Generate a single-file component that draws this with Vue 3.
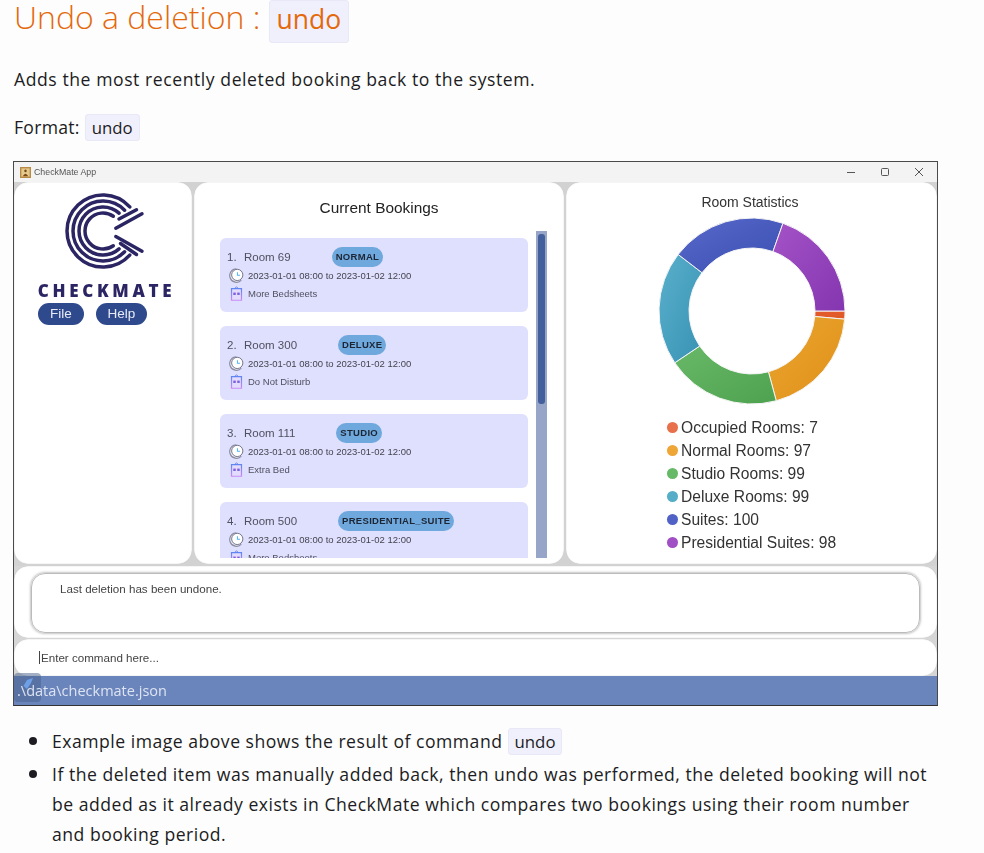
<script setup>
const bookings = [
  { n: '1.', room: 'Room 69', type: 'NORMAL', tag: 'More Bedsheets' },
  { n: '2.', room: 'Room 300', type: 'DELUXE', tag: 'Do Not Disturb' },
  { n: '3.', room: 'Room 111', type: 'STUDIO', tag: 'Extra Bed' },
  { n: '4.', room: 'Room 500', type: 'PRESIDENTIAL_SUITE', tag: 'More Bedsheets' }
]
const stats = [
  { label: 'Occupied Rooms: 7', v: 7, dot: '#e8704a', a: '#e55a2b', b: '#de5b26' },
  { label: 'Normal Rooms: 97', v: 97, dot: '#eea636', a: '#eaa52e', b: '#e0901a' },
  { label: 'Studio Rooms: 99', v: 99, dot: '#66b966', a: '#68b868', b: '#4ea24f' },
  { label: 'Deluxe Rooms: 99', v: 99, dot: '#56adc8', a: '#58b0cc', b: '#3a92b4' },
  { label: 'Suites: 100', v: 100, dot: '#5162c6', a: '#5868c8', b: '#3a50b4' },
  { label: 'Presidential Suites: 98', v: 98, dot: '#a04fc4', a: '#a452c6', b: '#8436b0' }
]
const total = stats.reduce((s, x) => s + x.v, 0)
const cx = 100, cy = 100, R = 93, r = 63
const pt = (rad, deg) => {
  const t = (deg * Math.PI) / 180
  return `${(cx + rad * Math.cos(t)).toFixed(2)} ${(cy + rad * Math.sin(t)).toFixed(2)}`
}
let acc = 0
const slices = stats.map((s, i) => {
  const start = acc
  const sweep = (s.v / total) * 360
  acc += sweep
  const end = acc
  const large = sweep > 180 ? 1 : 0
  return {
    id: 'grad' + i,
    a: s.a,
    b: s.b,
    d: `M${pt(R, start)} A${R} ${R} 0 ${large} 1 ${pt(R, end)} L${pt(r, end)} A${r} ${r} 0 ${large} 0 ${pt(r, start)} Z`
  }
})
const logoArc = (rad, deg) => {
  const c = 40
  const p = (d) => {
    const t = (d * Math.PI) / 180
    return `${(c + rad * Math.cos(t)).toFixed(2)} ${(c + rad * Math.sin(t)).toFixed(2)}`
  }
  return `M${p(-deg)} A${rad} ${rad} 0 1 0 ${p(deg)}`
}
const logoRings = [
  { rad: 36, deg: 42 },
  { rad: 30, deg: 44 },
  { rad: 24, deg: 48 },
  { rad: 18, deg: 55 }
]
</script>

<template>
  <div class="page">
    <h2 class="title">Undo a deletion : <code class="chip">undo</code></h2>
    <p class="lead">Adds the most recently deleted booking back to the system.</p>
    <p class="format">Format: <code class="chip small">undo</code></p>

    <div class="window">
      <div class="titlebar">
        <svg class="appicon" viewBox="0 0 12 12">
          <rect width="12" height="12" fill="#b98a45" />
          <rect x="1.5" y="1.5" width="9" height="9" fill="#e4c98e" />
          <path d="M6 2.8 a1.4 1.4 0 1 1 -.01 0 M3 10 Q6 4.5 9 10 Z" fill="#7a4716" />
        </svg>
        <span class="apptitle">CheckMate App</span>
        <div class="winbtns">
          <svg viewBox="0 0 10 10"><path d="M1 5.5h8" /></svg>
          <svg viewBox="0 0 10 10"><rect x="1.5" y="1.5" width="7" height="7" rx="1" /></svg>
          <svg viewBox="0 0 10 10"><path d="M1 1l8 8M9 1l-8 8" /></svg>
        </div>
      </div>

      <div class="panes">
        <section class="panel left">
          <svg class="logo" viewBox="0 0 80 80">
            <path v-for="ring in logoRings" :key="ring.rad" :d="logoArc(ring.rad, ring.deg)" class="ring" />
            <path d="M52.8 37.2 L79 22.8 M56 28 L73.5 18.8" class="ring" />
            <path d="M52.8 45.5 L79 60.2 M57.5 52.5 L73.5 63.5" class="ring" />
          </svg>
          <div class="wordmark">CHECKMATE</div>
          <div class="menu">
            <span class="pill">File</span>
            <span class="pill help">Help</span>
          </div>
        </section>

        <section class="panel center">
          <h3 class="heading">Current Bookings</h3>
          <div class="listarea">
            <div class="list">
              <article v-for="b in bookings" :key="b.n" class="card">
                <div class="row1">
                  <span class="num">{{ b.n }}</span>
                  <span class="room">{{ b.room }}</span>
                  <span class="badge">{{ b.type }}</span>
                </div>
                <div class="row2">
                  <svg class="icon" viewBox="0 0 16 16">
                    <path d="M8 .8 A7.2 7.2 0 1 0 13.2 13" fill="#f2f2fb" stroke="#8b8ba0" stroke-width="1.3" />
                    <circle cx="8.8" cy="7.4" r="6" fill="#fff" stroke="#6e6e84" stroke-width="1" />
                    <path d="M9 4.4V7.8H11.8" fill="none" stroke="#58b4ee" stroke-width="1.1" />
                  </svg>
                  <span>2023-01-01 08:00 to 2023-01-02 12:00</span>
                </div>
                <div class="row3">
                  <svg class="icon" viewBox="0 0 16 16">
                    <defs>
                      <linearGradient id="roomGrad" x1="0" y1="0" x2="0" y2="1">
                        <stop offset="0" stop-color="#5f86f2" />
                        <stop offset="1" stop-color="#c98cf4" />
                      </linearGradient>
                    </defs>
                    <path d="M2.7 2.8h10.6v12.4H2.7z" fill="#e4dcff" stroke="url(#roomGrad)" stroke-width="1.3" />
                    <path d="M5.8 2.8 8 .9l2.2 1.9" fill="none" stroke="#5f86f2" stroke-width="1" />
                    <rect x="4.6" y="7" width="2.6" height="2.6" fill="#7c5fe0" />
                    <rect x="8.8" y="7" width="2.6" height="2.6" fill="#7c5fe0" />
                  </svg>
                  <span>{{ b.tag }}</span>
                </div>
              </article>
            </div>
            <div class="track"><div class="thumb"></div></div>
          </div>
        </section>

        <section class="panel right">
          <h3 class="stat-heading">Room Statistics</h3>
          <svg class="donut" viewBox="0 0 200 200">
            <defs>
              <linearGradient v-for="s in slices" :id="s.id" :key="s.id" x1="0" y1="0" x2="1" y2="1">
                <stop offset="0" :stop-color="s.a" />
                <stop offset="1" :stop-color="s.b" />
              </linearGradient>
            </defs>
            <path v-for="s in slices" :key="s.id" :d="s.d" :fill="`url(#${s.id})`" stroke="#f4f4f4" stroke-width="1" />
          </svg>
          <ul class="legend">
            <li v-for="s in stats" :key="s.label">
              <i class="dot" :style="{ background: s.dot }"></i>{{ s.label }}
            </li>
          </ul>
        </section>
      </div>

      <div class="output-wrap">
        <div class="output">Last deletion has been undone.</div>
      </div>
      <div class="input"><span class="caret"></span>Enter command here...</div>
      <div class="status">
        <span class="float-btn">
          <svg viewBox="0 0 16 16"><path d="M7 3 13 1 11 6 7 12 3.5 9z" fill="#6f9fe6" /></svg>
        </span>
        <span class="status-text">.\data\checkmate.json</span>
      </div>
    </div>

    <ul class="notes">
      <li>Example image above shows the result of command <code class="chip small">undo</code></li>
      <li>If the deleted item was manually added back, then undo was performed, the deleted booking will not be added as it already exists in CheckMate which compares two bookings using their room number and booking period.</li>
    </ul>
  </div>
</template>

<style>
html, body { margin: 0; background: #fdfdfd; }
</style>

<style scoped>
.page {
  width: 984px;
  height: 853px;
  overflow: hidden;
  box-sizing: border-box;
  padding-left: 14px;
  font-family: "Open Sans", "Liberation Sans", sans-serif;
  font-size: 18px;
  color: #1c1c22;
  background: #fdfdfd;
}
.title {
  margin: 0;
  height: 43px;
  line-height: 34px;
  font-size: 32px;
  font-weight: 300;
  color: #e4690c;
  white-space: nowrap;
}
.chip {
  display: inline-block;
  font-family: "Open Sans", "Liberation Sans", sans-serif;
  padding: 0 6px;
  background: #f0f0fd;
  border: 1px solid #e8e8f6;
  border-radius: 3px;
  letter-spacing: 0;
}
.chip.small {
  line-height: 25px;
  font-size: 16.8px;
}
.title .chip {
  font-size: 26.5px;
  vertical-align: top;
  font-weight: 400;
  line-height: 37px;
  padding: 0 7px 4px;
}
.lead { margin: 23px 0 0; line-height: 26px; font-size: 17.6px; letter-spacing: 0.56px; }
.format { margin: 22px 0 0; line-height: 27px; font-size: 17.6px; letter-spacing: 0.28px; }
.window {
  width: 925px;
  height: 545px;
  margin: 20px 0 0 -1px;
  box-sizing: border-box;
  border: 1px solid #4a4a4a;
  border-bottom-color: #333;
  display: flex;
  flex-direction: column;
  background: #d6d6d6;
  font-family: "Liberation Sans", Arial, sans-serif;
  filter: blur(0.3px);
}
.titlebar {
  height: 20px;
  flex: none;
  background: #f3f3f3;
  display: flex;
  align-items: center;
  padding-left: 6px;
}
.appicon { width: 11px; height: 11px; margin-right: 3px; }
.apptitle { font-size: 8.8px; color: #555; }
.winbtns {
  margin-left: auto;
  display: flex;
  gap: 24px;
  padding-right: 13px;
}
.winbtns svg {
  width: 10px;
  height: 10px;
  fill: none;
  stroke: #555;
  stroke-width: 1;
}
.panes {
  height: 384px;
  flex: none;
  display: grid;
  grid-template-columns: 178px 370px 1fr;
  gap: 2px;
  background: #d2d2d2;
  padding-bottom: 2px;
  box-sizing: border-box;
}
.panel {
  background: #fff;
  border-radius: 14px;
  overflow: hidden;
  box-shadow: inset 0 0 1px #999;
  box-sizing: border-box;
  min-width: 0;
}
.left {
  display: flex;
  flex-direction: column;
  align-items: center;
  padding-top: 8.5px;
}
.logo { width: 80px; height: 80px; display: block; flex: none; overflow: visible; }
.ring { fill: none; stroke: #2b2663; stroke-width: 3.5; stroke-linecap: round; }
.wordmark {
  margin-top: 11px;
  font-family: "Open Sans", sans-serif;
  font-weight: 800;
  font-size: 17px;
  line-height: 18px;
  letter-spacing: 3.7px;
  color: #2b2663;
  white-space: nowrap;
  margin-left: 7px;
}
.menu {
  align-self: flex-start;
  display: flex;
  gap: 12px;
  margin: 3px 0 0 24px;
}
.pill {
  width: 46px;
  height: 22px;
  border-radius: 11px;
  background: #2e4a8c;
  color: #e8ecf6;
  font-size: 13.5px;
  line-height: 22px;
  text-align: center;
}
.pill.help { width: 51px; }
.heading {
  margin: 0;
  padding-top: 16px;
  font-size: 15.4px;
  line-height: 19px;
  font-weight: 400;
  text-align: center;
  color: #222;
}
.listarea {
  display: flex;
  margin-top: 14px;
  height: 327px;
  padding-left: 26px;
  box-sizing: border-box;
}
.list {
  width: 308px;
  padding-top: 7px;
  overflow: hidden;
  display: flex;
  flex-direction: column;
  gap: 14px;
}
.card {
  flex: none;
  height: 74px;
  box-sizing: border-box;
  padding: 9px 0 0 7px;
  background: #dfdffe;
  border-radius: 6px;
  color: #505060;
}
.row1 { display: flex; align-items: center; height: 20px; font-size: 11.5px; }
.num { width: 17px; }
.badge {
  margin-left: 41px;
  background: #6fa8dc;
  border-radius: 10px;
  height: 20px;
  line-height: 20px;
  padding: 0 4px;
  font-size: 9.5px;
  font-weight: 700;
  letter-spacing: 0.3px;
  color: #1d2433;
}
.row2, .row3 {
  display: flex;
  align-items: center;
  font-size: 9.5px;
  padding-left: 2px;
}
.row2 { height: 17px; color: #44444f; }
.row3 { height: 19px; }
.icon { width: 15px; height: 15px; margin-right: 4px; flex: none; }
.track {
  width: 11px;
  margin-left: 8px;
  background: #97a5c8;
  flex: none;
  display: flex;
  justify-content: center;
  padding-top: 3px;
  box-sizing: border-box;
}
.thumb {
  width: 7px;
  height: 170px;
  background: #44609c;
  border-radius: 3px;
}
.stat-heading {
  margin: 0;
  padding-top: 12px;
  font-size: 14px;
  line-height: 16px;
  font-weight: 400;
  text-align: center;
  color: #333;
  padding-right: 3px;
}
.donut {
  display: block;
  width: 200px;
  height: 200px;
  margin: 1px 0 0 86px;
}
.legend {
  list-style: none;
  margin: 5px 0 0;
  padding: 0 0 0 101px;
  font-size: 15.6px;
  color: #333;
}
.legend li { height: 23px; line-height: 23px; display: flex; align-items: center; white-space: nowrap; }
.dot {
  width: 11px;
  height: 11px;
  border-radius: 50%;
  margin-right: 3px;
  flex: none;
}
.output-wrap {
  height: 72px;
  flex: none;
  background: #fff;
  border-radius: 14px;
  padding: 7px 17px 5px 17px;
  box-sizing: border-box;
  box-shadow: inset 0 0 1px #999;
}
.output {
  height: 100%;
  box-sizing: border-box;
  border: 1px solid #bbb;
  border-radius: 14px;
  box-shadow: 0 0 3px #888;
  padding: 8px 0 0 28px;
  font-size: 11.6px;
  line-height: 14px;
  color: #444;
}
.input {
  height: 37px;
  flex: none;
  margin-top: 1px;
  background: #fff;
  border-radius: 14px;
  font-size: 11.6px;
  color: #444;
  display: flex;
  align-items: center;
  padding-left: 25px;
  box-shadow: inset 0 0 1px #999;
}
.caret { width: 1px; height: 13px; background: #444; margin-right: 1px; }
.status {
  flex: 1;
  background: #6a84bc;
  position: relative;
  display: flex;
  align-items: center;
  padding-left: 3px;
}
.status-text {
  font-family: "Open Sans", sans-serif;
  font-size: 14.5px;
  color: #dde4f2;
  position: relative;
}
.float-btn {
  position: absolute;
  left: 0;
  top: -3px;
  width: 27px;
  height: 29px;
  background: rgba(70, 95, 140, 0.5);
  border-radius: 4px;
  display: flex;
  align-items: center;
  justify-content: center;
}
.float-btn svg { width: 16px; height: 16px; margin-bottom: 6px; }
.notes {
  list-style: none;
  margin: 20px 0 0;
  padding: 0 0 0 38px;
  font-size: 17.6px;
  line-height: 30px;
  width: 926px;
  box-sizing: border-box;
  letter-spacing: 0.5px;
}
.notes li { margin: 0 0 3px; position: relative; }
.notes li::before {
  content: "";
  position: absolute;
  left: -23px;
  top: 11px;
  width: 8px;
  height: 8px;
  border-radius: 50%;
  background: #1c1c22;
}
</style>
